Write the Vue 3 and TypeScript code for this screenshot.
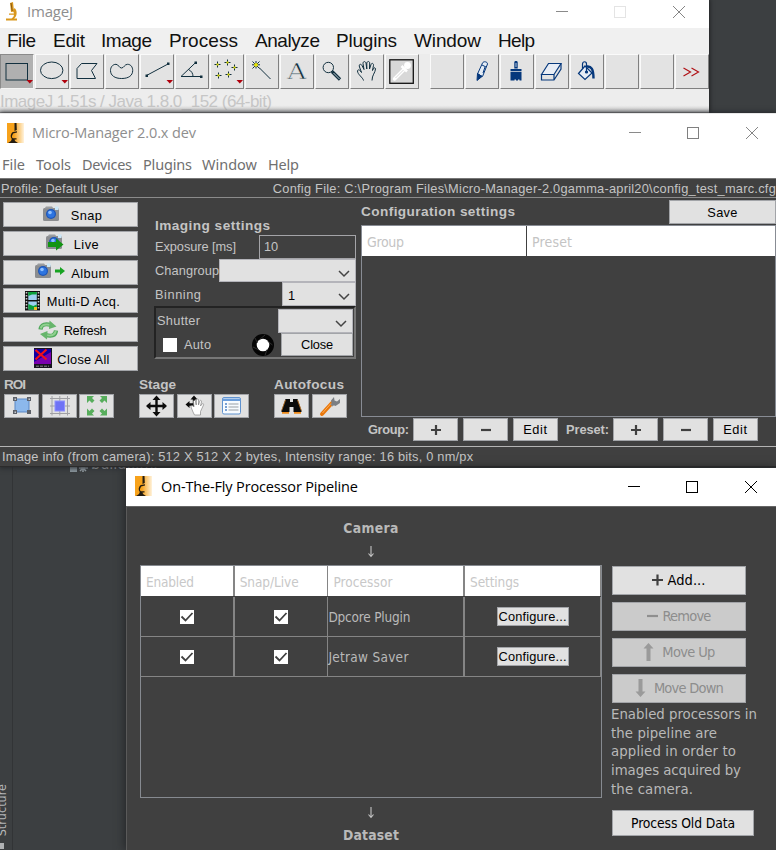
<script setup lang="ts">
interface MenuItem { label: string; fit: number }
interface Tool { name: string; art: string; pressed?: boolean }
interface Action { label: string; fit: number; iconWidth: number; art: string }

// Spreads the letters of a label so that it fills the given width.
const vFit = {
  mounted(el: HTMLElement, binding: { value: number }) {
    const count = (el.textContent ?? '').trim().length
    if (count < 2) return
    const range = document.createRange()
    range.selectNodeContents(el)
    const width = range.getBoundingClientRect().width
    el.style.letterSpacing = ((binding.value - width) / (count - 1)).toFixed(3) + 'px'
  },
}

const ijMenu: MenuItem[] = [
  { label: 'File', fit: 29 }, { label: 'Edit', fit: 32 }, { label: 'Image', fit: 51 }, { label: 'Process', fit: 69 },
  { label: 'Analyze', fit: 65 }, { label: 'Plugins', fit: 61 }, { label: 'Window', fit: 67 }, { label: 'Help', fit: 37 },
]
const mmMenu: MenuItem[] = [
  { label: 'File', fit: 23 }, { label: 'Tools', fit: 35 }, { label: 'Devices', fit: 50 },
  { label: 'Plugins', fit: 49 }, { label: 'Window', fit: 55 }, { label: 'Help', fit: 31 },
]

const tri = '<path d="M26.500 26h6.500l-3.200 3.600z" fill="#b0000c" stroke="none"/>'
const plus = (x: number, y: number) =>
  `<path d="M${x - 3} ${y}h6M${x} ${y - 3}v6" stroke="#12303f"/><rect x="${x - 1}" y="${y - 1}" width="2" height="2" fill="#e2e000" stroke="none"/>`

const mainTools: Tool[] = [
  { name: 'rect', pressed: true, art: '<rect x="6" y="9.5" width="21.5" height="16.5"/>' + tri },
  { name: 'oval', art: '<ellipse cx="16.7" cy="16.3" rx="11.2" ry="8.3"/>' + tri },
  { name: 'polygon', art: '<path d="M7 14.5 11.5 9.5H27L21.5 16.5 25.5 24.5H7z"/>' },
  { name: 'freehand', art: '<path d="M11 10.3c2.500 0 3 3.700 5.500 3.700s3-3.700 6-3.700c3.500 0 5.200 3 5.200 6.200 0 5-4 8-11 8S5.500 21.500 5.500 16.500c0-3.200 2-6.200 5.500-6.200z"/>' },
  { name: 'line', art: '<path d="M6.500 21.500 28 10"/><path d="M5.500 20.500h2.500v2.500H5.500zM27 8.500h2.500V11H27z" fill="#12303f" stroke="none"/>' + tri },
  { name: 'angle', art: '<path d="M26.500 22.500H6L20.500 8.700M13.500 15.500c3 1.500 4.500 4 4.500 7"/><path d="M25 21.500h2.500V24H25zM19.500 7.500H22V10h-2.500z" fill="#12303f" stroke="none"/>' },
  { name: 'points', art: plus(7.5, 10.5) + plus(17.5, 8.5) + plus(24.5, 13.5) + plus(8.5, 21.5) + plus(18.5, 20.5) + tri },
  { name: 'wand', art: '<path d="M7.500 7.500l7 7M14.500 7.500l-7 7M11 7v7.500M7 10.800h8M14 13.500l11.500 11.500"/><circle cx="11" cy="10.800" r="1.900" fill="#e8e600" stroke="none"/>' },
  { name: 'text', art: '<text x="16.700" y="24.500" text-anchor="middle" font-family="DejaVu Serif, serif" font-size="22" textLength="19" lengthAdjust="spacingAndGlyphs" fill="#12303f" stroke="#e3e3e3" stroke-width=".6">A</text>' },
  { name: 'zoom', art: '<circle cx="13.300" cy="13.500" r="5.200"/><path d="M17 17.500l8 8" stroke-width="3.200"/><path d="M18.500 19l6 6" stroke="#b8c4cc" stroke-width="1"/>' },
  { name: 'hand', art: '<path d="M13.500 26.500c-.5-3-6-6-6-9.500 0-1.500 2-2 4 1.500L9.500 13c-1-3 1.500-3.500 2.500-1.500l2 4-1-6c0-2.500 2.500-2.500 3-.3l.8 5.800V9c.5-2 2.700-2 2.900 0l-.2 6 1.500-4.500c.8-2 2.800-1 2.500.8l-1 5.200c1-3 3-3.500 3-1.500-.3 4-3.500 6-3.500 11.500"/>' },
  { name: 'dropper', art: '<rect x="4.800" y="5.800" width="23.500" height="23.500" fill="#d8d8d8" stroke="#111" stroke-width="1.300"/><path d="M9.500 25 19 15.500" stroke="#fff" stroke-width="3.500" stroke-linecap="round"/><path d="M10.500 24 19 15.500" stroke="#d8d8d8" stroke-width="1"/><circle cx="22.500" cy="11.500" r="3.400" fill="#fff" stroke="none"/><path d="M16.500 12l5.500 5.500" stroke="#fff" stroke-width="2.500"/>' },
]
const extraTools: Tool[] = [
  { name: 'blank-a', art: '' },
  { name: 'pencil', art: '<g stroke="#06387c"><path d="M12.500 20 17.500 9c1-2 5-1.500 5 1L17.500 22.500z" fill="#e4ecf5"/><path d="M17 11l4 2M18 19l2-6"/><path d="M12.500 19.500l4.500 3-5 4z" fill="#06387c"/></g>' },
  { name: 'brush', art: '<g fill="#06387c" stroke="none"><path d="M14.300 8c0-1.500 3.400-1.500 3.400 0v6.500h-3.400zM10.500 15h11v2h-11zM10.500 17.700h11v8.800h-2v-1h-1.500v1h-2v-1h-1.500v1h-4z"/><path d="M15.500 9h1v4h-1z" fill="#b5c8de"/></g>' },
  { name: 'eraser', art: '<g stroke="#06387c" stroke-width="1.200"><path d="M6.500 20.500 13.500 9.500H26L19 20.500z" fill="#e8edf5"/><path d="M6.500 20.500v5.500H19l7-11V9.500M19 20.500V26"/></g>' },
  { name: 'bucket', art: '<g stroke="#06387c" stroke-width="1.200"><path d="M8.500 19.500 15 12l7 7-7 6.500z" fill="#e8edf5"/><path d="M12.500 14.500V10c0-3 4-3 4 0v8"/><path d="M17 12.500c4-.5 6.500 2 6.500 12" stroke-width="2.400"/><circle cx="16.500" cy="18" r="1" fill="#06387c"/></g>' },
  { name: 'blank-b', art: '' },
  { name: 'blank-c', art: '' },
  { name: 'more', art: '<path d="M8.500 14l7 4-7 4M16.500 14l7 4-7 4" stroke="#b01116" stroke-width="1.200"/>' },
]

const camera = '<rect x="1" y="3" width="16" height="13" rx="1.500" fill="#8b8d90"/><path d="M4 1.500h6l1.500 2H2.500z" fill="#9b9da0"/><rect x="13" y="1.500" width="3.500" height="3.500" fill="#c9e6f7"/><circle cx="9" cy="9" r="5" fill="#1c55b8"/><circle cx="9" cy="9" r="3.800" fill="#2d74e0"/><circle cx="8" cy="7.500" r="1.800" fill="#8fc0ff"/>'
const actions: Action[] = [
  { label: 'Snap', fit: 31, iconWidth: 24, art: camera },
  { label: 'Live', fit: 25, iconWidth: 24, art: camera + '<path d="M3 9h8V5.500l7.500 6L11 17.500V14H3z" fill="#129412"/>' },
  { label: 'Album', fit: 38, iconWidth: 32, art: camera + '<path d="M21 7.500h5V5l5 4-5 4v-2.500h-5z" fill="#18a322"/>' },
  { label: 'Multi-D Acq.', fit: 73, iconWidth: 18, art: '<rect x="1" width="15" height="19.500" fill="#111"/><rect x="4.300" y="1" width="8.500" height="8" fill="#9fd0f0"/><rect x="4.300" y="10.500" width="8.500" height="8" fill="#9fd0f0"/><path d="M4.300 1h8.500v2.500H8L4.300 5zM4.300 13l5 2 3.500-1.500v5H4.300z" fill="#0ba03a"/><path d="M2.500 1v18M14.500 1v18" stroke="#c8c8c8" stroke-width="1.600" stroke-dasharray="1.500 1.500"/><rect x="10" y="16" width="3" height="3" fill="#f0c020"/>' },
  { label: 'Refresh', fit: 43, iconWidth: 21, art: '<g fill="none" stroke="#4fa85a" stroke-width="4.200"><path d="M2.500 9.500C3 4 8 3.500 13 5"/><path d="M18 10.500c-.5 5.500-5 6-10.500 4.500"/></g><g fill="none" stroke="#8fd08f" stroke-width="2"><path d="M2.700 8.500C3.500 4.500 8 3.800 13 5"/><path d="M17.800 11c-1 4.500-5.500 5-10.300 4"/></g><path d="M11.500.5l7 6-7.500 2.500zM9 19.500l-7-5.500 7.500-3z" fill="#67b56c"/>' },
  { label: 'Close All', fit: 52, iconWidth: 18, art: '<rect width="18" height="20" fill="#17141f"/><path d="M0 1h17v9L8 15H0z" fill="#1500a0"/><path d="M17 4v12H0v-2z" fill="#7a00ae"/><path d="M1.500 2l11 9.500M12.500 1.500l-11 10" stroke="#f21018" stroke-width="2.200"/><path d="M2 18.200h13" stroke="#888" stroke-dasharray="3 1"/>' },
]

const arrows4 = '<path d="M17.500 3v18M8.500 12h18" stroke="#0c0c0c" stroke-width="2.400"/><path d="M17.500 1.500l4 4.500h-8zM17.500 22.500l4-4.500h-8zM7 12l4.500-4v8zM28 12l-4.500-4v8z" fill="#0c0c0c"/>'
const toolGroups = [
  { title: 'ROI', fit: 22, icons: [
    '<rect x="11" y="5" width="14" height="13" fill="#8cb8ec" stroke="#5a87c4"/><path d="M9 3h4v4H9zM23 3h4v4h-4zM9 16h4v4H9zM23 16h4v4h-4z" fill="#5c6068"/><path d="M10.500 4.500h1.500V6h-1.500zM24.500 4.500H26V6h-1.500zM10.500 17.500h1.500V19h-1.500z" fill="#c5c9cf"/>',
    '<path d="M8 4.500h20M8 12h20M8 19.500h20M10 2v19.500M17.800 2v19.500M25.500 2v19.500" stroke="#a0a0a4"/><rect x="13" y="7" width="9.500" height="10" fill="#6f72f5" stroke="#8f92ff"/>',
    '<g fill="#57ad5c"><path d="M8 2h7l-2 2 2.500 2.500-2.500 2.500L10.500 6.500 8 9zM28 2h-7l2 2-2.500 2.500L23 9l2.500-2.500L28 9zM8 21.500h7l-2-2 2.500-2.500-2.500-2.500-2.500 2.500L8 14.500zM28 21.500h-7l2-2-2.500-2.500 2.500-2.500 2.500 2.500 2.500-2.500z"/></g>',
  ] },
  { title: 'Stage', fit: 37, icons: [
    arrows4,
    '<path d="M17 3v12M10 10.500h12" stroke="#0c0c0c" stroke-width="2.400"/><path d="M17 1.500l3.500 4h-7zM8.500 10.500l4-3.500v7z" fill="#0c0c0c"/><path d="M16 18l-2-5c0-2 2-1.500 3 0l-.5-5.500c0-1.500 1.500-1.500 2 0l.7 3.500.3-5c.3-1.500 1.900-1.500 2 0v5l1.300-4c.6-1.300 2-.6 1.700.8l-1 4.200 1.500-2c1-1 2 0 1.500 1l-3 6.500V21h-6z" fill="#fff" stroke="#888" stroke-width=".700"/>',
    '<rect x="8.500" y="3.500" width="18" height="16.500" rx="1.500" fill="#f7fbff" stroke="#5f92cf"/><path d="M8.500 4.500h18v2.500h-18z" fill="#6c9edb"/><path d="M11 10h2M11 13h2M11 16h2" stroke="#4f82c4" stroke-width="1.300"/><path d="M14.500 10h10M14.500 13h10M14.500 16h10" stroke="#9a9fa6" stroke-width="1.100"/>',
  ] },
  { title: 'Autofocus', fit: 70, icons: [
    '<path d="M11.500 5H16v3h3V5h4.500l4 11.500v1.500h-8v-5h-4v5h-8v-1.500z" fill="#0b0b0b"/><path d="M8 18.800h7M20 18.800h7" stroke="#ec8a1c" stroke-width="1.700"/><path d="M11.500 6l-3.800 10.500M23.500 6l3.800 10.500" stroke="#c87a24" stroke-width=".800"/>',
    '<path d="M10 20 20 9" stroke="#e8770c" stroke-width="4" stroke-linecap="round"/><path d="M10.500 19l8.500-9.500" stroke="#ffae57" stroke-width="1"/><path d="M19.500 11.500l3-3" stroke="#84888c" stroke-width="3"/><path d="M22 3l-3 3.500 1 4 3.500 1.500 4.500-3V5l-3 2.500-2.500-1z" fill="#7b7f84"/>',
  ] },
]

const headers: MenuItem[] = [
  { label: 'Enabled', fit: 48 }, { label: 'Snap/Live', fit: 59 },
  { label: 'Processor', fit: 59 }, { label: 'Settings', fit: 49 },
]
const processors: MenuItem[] = [{ label: 'Dpcore Plugin', fit: 82 }, { label: 'Jetraw Saver', fit: 80 }]
const help: MenuItem[] = [
  { label: 'Enabled processors in', fit: 146 }, { label: 'the pipeline are', fit: 106 },
  { label: 'applied in order to', fit: 125 }, { label: 'images acquired by', fit: 130 }, { label: 'the camera.', fit: 82 },
]
const groupBars = [{ label: 'Group:', fit: 41 }, { label: 'Preset:', fit: 43 }]
</script>

<template>
  <div class="desktop">
    <aside class="stripe"><span>Structure</span><i></i></aside>
    <div class="tree-file">
      <svg width="18" height="16"><path d="M0 8h7v8H0z" fill="#8b979e" /><path d="M13 7v9M9 12h9M10 9l6 6M16 9l-6 6" stroke="#9aa5ab" stroke-width="1.500" /></svg>
      <span>build.xml</span>
    </div>

    <section class="window ij">
      <header class="titlebar faded">
        <svg class="app-icon" width="24" height="22" viewBox="0 0 24 22">
          <path d="M10 2l3-1 1 9.500-3 .5zM9 12.500h5v1.300H9zM14.500 7c3 2.500 3 8-.5 10.500h3v2H6v-2h5.500c3-1.500 3-5 1.500-7.500z" fill="#d9971c" />
          <path d="M11 2l1.200 8" stroke="#8a5a12" />
        </svg>
        <span v-fit="46" class="title">ImageJ</span>
        <svg class="controls" width="130" height="14" viewBox="0 0 130 14" fill="none">
          <path d="M0 6.500h12" stroke="#8a8a8a" /><rect x="58.500" y="1.500" width="11" height="11" stroke="#e4e4e4" />
          <path d="M117 1l12 12M129 1l-12 12" stroke="#858585" />
        </svg>
      </header>
      <nav class="ij-menu"><span v-for="m in ijMenu" :key="m.label"><span v-fit="m.fit">{{ m.label }}</span></span></nav>
      <div class="toolbar">
        <div v-for="t in mainTools" :key="t.name" class="tool" :class="{ pressed: t.pressed }">
          <svg width="34" height="34" viewBox="0 0 34 34" fill="none" stroke="#12303f" v-html="t.art"></svg>
        </div>
        <div class="spacer"></div>
        <div v-for="t in extraTools" :key="t.name" class="tool">
          <svg width="34" height="34" viewBox="0 0 34 34" fill="none" stroke="#12303f" v-html="t.art"></svg>
        </div>
      </div>
      <div class="ij-status"><span v-fit="272">ImageJ 1.51s / Java 1.8.0_152 (64-bit)</span></div>
    </section>

    <section class="window mm">
      <header class="titlebar faded">
        <svg class="app-icon" width="17" height="20" viewBox="0 0 17 20">
          <defs><linearGradient id="glow"><stop offset=".4" stop-color="#f7a21b" /><stop offset="1" stop-color="#fff3dd" /></linearGradient></defs>
          <rect width="17" height="20" fill="url(#glow)" />
          <path d="M7.500 0h2l.3 7-2.300 1zM6 9l4-.8v1.300L6 10.500zM6.500 10c-2 3-2 4.500-.5 5.200h3.500v1.300H7.500l.5 1.500 3 2H1l3-2 .8-2C3 14 3.500 11 5.500 9z" fill="#241c10" />
        </svg>
        <span v-fit="164" class="title">Micro-Manager 2.0.x dev</span>
        <svg class="controls" width="130" height="14" viewBox="0 0 130 14" fill="none">
          <path d="M0 6.500h12" stroke="#8a8a8a" /><rect x="58.500" y="1.500" width="11" height="11" stroke="#808080" />
          <path d="M117 1l12 12M129 1l-12 12" stroke="#858585" />
        </svg>
      </header>
      <nav class="mm-menu"><span v-for="m in mmMenu" :key="m.label"><span v-fit="m.fit">{{ m.label }}</span></span></nav>
      <div class="profile">
        <span v-fit="117">Profile: Default User</span>
        <span v-fit="503">Config File: C:\Program Files\Micro-Manager-2.0gamma-april20\config_test_marc.cfg</span>
      </div>

      <div class="main">
        <div class="left">
          <div class="upper">
            <div class="actions">
              <button v-for="a in actions" :key="a.label" class="btn action">
                <svg :width="a.iconWidth" height="20" :viewBox="`0 0 ${a.iconWidth} 20`" v-html="a.art"></svg>
                <span v-fit="a.fit">{{ a.label }}</span>
              </button>
            </div>
            <div class="imaging">
              <h3><span v-fit="115">Imaging settings</span></h3>
              <div class="field"><span v-fit="81">Exposure [ms]</span><div class="input">10</div></div>
              <div class="field">
                <span v-fit="64">Changroup</span>
                <div class="combo wide"><svg width="12" height="8"><path d="M1 1l5 5 5-5" /></svg></div>
              </div>
              <div class="field">
                <span v-fit="46">Binning</span>
                <div class="combo"><b>1</b><svg width="12" height="8"><path d="M1 1l5 5 5-5" /></svg></div>
              </div>
              <div class="shutter">
                <div class="field">
                  <span v-fit="43">Shutter</span>
                  <div class="combo"><svg width="12" height="8"><path d="M1 1l5 5 5-5" /></svg></div>
                </div>
                <div class="shutter-row">
                  <i class="box"></i><span v-fit="27">Auto</span>
                  <svg class="iris" width="24" height="24" viewBox="0 0 24 24">
                    <circle cx="12" cy="12" r="11" fill="#050505" /><circle cx="12" cy="12" r="6.300" fill="#fff" />
                    <path d="M8 7L14 2M16.500 8l5 4M16 16.500l-2 6M8 17l-6-3M6.500 10L4 5" stroke="#3a3a3a" stroke-width=".800" />
                  </svg>
                  <button class="btn close"><span v-fit="32">Close</span></button>
                </div>
              </div>
            </div>
          </div>
          <div class="groups">
            <div v-for="g in toolGroups" :key="g.title" class="group">
              <h3><span v-fit="g.fit">{{ g.title }}</span></h3>
              <div class="group-buttons">
                <button v-for="(art, i) in g.icons" :key="i" class="btn square">
                  <svg width="35" height="24" viewBox="0 0 35 24" v-html="art"></svg>
                </button>
              </div>
            </div>
          </div>
        </div>

        <div class="config">
          <div class="config-head">
            <h3><span v-fit="154">Configuration settings</span></h3>
            <button class="btn save"><span v-fit="30">Save</span></button>
          </div>
          <div class="config-table">
            <div class="th"><span v-fit="37">Group</span></div>
            <div class="th preset"><span v-fit="40">Preset</span></div>
          </div>
          <div class="config-bar">
            <div v-for="g in groupBars" :key="g.label" class="bar-group">
              <strong><span v-fit="g.fit">{{ g.label }}</span></strong>
              <button class="btn"><svg width="12" height="12"><path d="M1 6h10M6 1v10" stroke="#404040" stroke-width="2.200" /></svg></button>
              <button class="btn"><svg width="12" height="12"><path d="M1 6h10" stroke="#404040" stroke-width="2.200" /></svg></button>
              <button class="btn"><span v-fit="24">Edit</span></button>
            </div>
          </div>
        </div>
      </div>
      <footer><span v-fit="471">Image info (from camera): 512 X 512 X 2 bytes, Intensity range: 16 bits, 0 nm/px</span></footer>
    </section>

    <section class="window pipeline">
      <header class="titlebar">
        <svg class="app-icon" width="17" height="20" viewBox="0 0 17 20">
          <rect width="17" height="20" fill="url(#glow)" />
          <path d="M7.500 0h2l.3 7-2.300 1zM6 9l4-.8v1.300L6 10.500zM6.500 10c-2 3-2 4.500-.5 5.200h3.500v1.300H7.500l.5 1.500 3 2H1l3-2 .8-2C3 14 3.500 11 5.500 9z" fill="#241c10" />
        </svg>
        <span v-fit="197" class="title">On-The-Fly Processor Pipeline</span>
        <svg class="controls" width="130" height="14" viewBox="0 0 130 14" fill="none" stroke="#000">
          <path d="M0 6.500h12" /><rect x="58.500" y="1.500" width="11" height="11" /><path d="M117 1l12 12M129 1l-12 12" />
        </svg>
      </header>
      <div class="flow">
        <div class="chain">
          <h4 class="first"><span v-fit="55">Camera</span></h4>
          <svg class="arrow" width="8" height="12"><path d="M4 0v10M1.500 7.500l2.500 3 2.500-3" /></svg>
          <div class="table">
            <div class="row head"><div v-for="h in headers" :key="h.label"><span v-fit="h.fit">{{ h.label }}</span></div></div>
            <div v-for="p in processors" :key="p.label" class="row">
              <div v-for="n in 2" :key="n" class="mid">
                <i class="box"><svg width="14" height="14"><path d="M1.500 6.500l4 4 7-7.500" /></svg></i>
              </div>
              <div><span v-fit="p.fit">{{ p.label }}</span></div>
              <div class="mid"><button class="btn configure"><span v-fit="68">Configure...</span></button></div>
            </div>
          </div>
          <svg class="arrow" width="8" height="12"><path d="M4 0v10M1.500 7.500l2.500 3 2.500-3" /></svg>
          <h4><span v-fit="56">Dataset</span></h4>
        </div>
        <div class="side">
          <button class="btn">
            <svg width="11" height="12"><path d="M0 6h11M5.500 .5v11" stroke="#404040" stroke-width="2.200" /></svg><span v-fit="38">Add...</span>
          </button>
          <button class="btn off">
            <svg width="11" height="12"><path d="M0 6h11" stroke="#8f8f8f" stroke-width="2.200" /></svg><span v-fit="49">Remove</span>
          </button>
          <button class="btn off">
            <svg width="15" height="20"><path d="M5.500 1l5 5.500h-3V19h-4V6.500h-3z" fill="#9a9a9a" /></svg><span v-fit="53">Move Up</span>
          </button>
          <button class="btn off">
            <svg width="15" height="20"><path d="M5.500 19l5-5.500h-3V1h-4v12.500h-3z" fill="#9a9a9a" /></svg><span v-fit="70">Move Down</span>
          </button>
          <p><span v-for="l in help" :key="l.label"><span v-fit="l.fit">{{ l.label }}</span></span></p>
          <button class="btn old"><span v-fit="104">Process Old Data</span></button>
        </div>
      </div>
    </section>
  </div>
</template>

<style>
body { margin: 0; overflow: hidden; background: #3c3f41; }
</style>

<style scoped>
* { box-sizing: border-box; }
.desktop {
  position: relative; width: 776px; height: 850px; overflow: hidden; background: #3c3f41;
  font-family: "Liberation Sans", Arial, sans-serif; font-size: 12.800px; white-space: nowrap;
}
h3, h4, p { margin: 0; }
svg { display: block; flex: none; }
.window { position: absolute; overflow: hidden; }

.stripe { position: absolute; top: 466px; left: 0; width: 13px; height: 384px; border-right: 1px solid #323436; }
.stripe span { position: absolute; right: 4px; top: 318px; writing-mode: vertical-rl; transform: rotate(180deg); font: 12.500px/12px "DejaVu Sans Condensed", "Noto Sans", sans-serif; color: #b4b6b8; }
.stripe i { position: absolute; left: 0; bottom: 1px; width: 4px; height: 6px; background: #b0b2b4; }
.tree-file { position: absolute; left: 70px; top: 456px; display: flex; gap: 3px; color: #b0b2b4; }
.tree-file span { font: 16px/16px "DejaVu Sans Condensed", "Noto Sans", sans-serif; }

.btn {
  display: flex; align-items: center; justify-content: center; margin: 0; padding: 0;
  border: 1.5px solid #a2a4a8; border-radius: 0; background: #e1e1e1; color: #000; font: inherit; white-space: nowrap;
}
.titlebar { display: flex; align-items: center; background: #fff; font: 14.500px "Open Sans", "Noto Sans", sans-serif; color: #000; }
.titlebar.faded { color: #8e8e8e; }
.controls { margin-left: auto; }
.title { margin-top: -2px; }

/* ImageJ */
.ij { left: 0; top: 0; width: 709px; height: 113px; background: #ececec; border-bottom: 1px solid #a2a2a2; box-shadow: 0 0 4px 1px #202224; }
.ij .titlebar { height: 28px; padding: 0 23px 4px 0; font-size: 15px; }
.ij .title { margin-left: 3px; }
.ij-menu { display: grid; grid-template-columns: 46px 48px 68px 86px 81px 78px 84px 60px; height: 26px; padding: 0 0 1px 7px; align-items: center; background: #f0f0f0; font-size: 19px; color: #111; }
.toolbar { display: flex; gap: 1px; height: 36px; }
.tool { flex: none; width: 34px; height: 35px; background: #e3e3e3; border: 1px solid #fafafa; border-right: 1.5px solid #808080; border-bottom: 1.5px solid #808080; }
.tool svg { margin: -1px; }
.tool.pressed { background: #b0b0b0; border-color: #8a8a8a #f4f4f4 #f4f4f4 #8a8a8a; }
.spacer { width: 10.500px; }
.ij-status { height: 22px; line-height: 23px; font-size: 17px; color: #c6c6c6; background: linear-gradient(#ededed 70%, #d4d4d4); }

/* Micro-Manager */
.mm { left: 0; top: 113px; width: 776px; height: 354px; background: #404040; color: #c4c4c4; border-bottom: 1px solid #2b2b2b; box-shadow: 0 0 5px 1px #25272a; }
.mm .titlebar { height: 39px; padding: 0 17px 0 7px; border-top: 1px solid #e8e8e8; }
.mm .title { margin-left: 8px; }
.mm-menu { display: grid; grid-template-columns: 34px 46px 61px 59px 66px 40px; height: 24px; padding: 0 0 1px 2px; align-items: center; background: #fff; color: #707070; font: 14.500px "Noto Sans", sans-serif; }
.profile { display: flex; justify-content: space-between; height: 22px; padding-left: 1px; line-height: 22px; border-top: 2px solid #fff; border-bottom: 1.500px solid #8b8b8b; box-shadow: inset 0 1px #777; }
.main { display: flex; height: 249px; border-bottom: 1.500px solid #b4b4b4; }
.left { width: 361px; flex: none; }
.upper { display: flex; height: 177px; }
.actions { display: flex; flex-direction: column; gap: 3.750px; padding: 4px 0 0 3px; }
.action { width: 135px; height: 25px; gap: 5px; padding-left: 3px; }
.action span { padding-top: 2px; }
h3 { height: 18px; font-size: 13.600px; line-height: 18px; font-weight: 700; }
.imaging { width: 202px; margin-left: 16px; padding-top: 19px; }
.imaging h3 { padding-left: 1px; }
.field { display: flex; height: 23.700px; padding-left: 1px; align-items: center; justify-content: space-between; }
.input { width: 97px; height: 23.500px; padding-left: 4px; border: 1.500px solid #a4a4a8; line-height: 22px; }
.combo { display: flex; align-items: center; width: 74px; height: 23.500px; padding: 2px 5px 0 5px; background: #e1e1e1; border: 1px solid #b4b4ba; color: #000; }
.combo b { font-weight: 400; }
.combo.wide { width: 137px; }
.combo svg { margin-left: auto; margin-top: 4px; fill: none; stroke: #444; stroke-width: 1.500; }
.shutter { height: 53px; padding: 1px 1px 0 1px; border: 2px solid #232323; border-right-color: #777; border-bottom-color: #777; }
.shutter .field { padding-left: 0; }
.shutter .combo { width: 75px; }
.shutter-row { display: flex; align-items: center; height: 24px; padding-left: 6px; }
.box { display: block; flex: none; width: 14px; height: 14px; background: #fff; }
.shutter-row span { margin-left: 7px; }
.iris { margin-left: 40px; }
.shutter-row .close { width: 72px; height: 23px; margin-left: auto; }
.shutter-row .close span { margin: 0; }
.groups { display: flex; padding-left: 4px; }
.group { width: 135px; flex: none; }
.group h3 { height: 19px; line-height: 19px; }
.group-buttons { display: flex; gap: 2.600px; }
.square { width: 35px; height: 24px; }
.square svg { margin: -1.500px; }
.config { display: flex; flex-direction: column; flex: 1; }
.config-head { display: flex; justify-content: space-between; height: 27px; }
.config-head h3 { padding-top: 5px; }
.save { width: 107px; height: 24px; margin-top: 2px; }
.config-table { display: grid; grid-template-columns: 164px 1fr; column-gap: 1px; align-items: start; height: 192px; border: 1px solid #888c94; }
.th { height: 30px; padding-left: 5px; background: #fff; color: #c4c4c4; font: 14px/32px "DejaVu Sans Condensed", "Noto Sans", sans-serif; }
.config-bar { display: flex; gap: 8px; padding: 1px 0 0 7px; }
.bar-group { display: flex; align-items: center; gap: 5px; }
.bar-group strong { width: 41px; margin-right: -1px; }
.bar-group:last-child strong { width: 43px; }
.bar-group .btn { width: 45px; height: 23px; }
footer { height: 19px; padding-left: 2px; line-height: 19px; }

/* Processor pipeline */
.pipeline { left: 126px; top: 468px; width: 650px; height: 382px; background: #404040; color: #b9b9b9; font-family: "DejaVu Sans Condensed", "Noto Sans", sans-serif; font-size: 13.500px; box-shadow: -1px 0 9px #222426; }
.pipeline .titlebar { height: 38px; padding: 0 18px 0 9px; font-family: "Open Sans", "Noto Sans", sans-serif; }
.pipeline .app-icon { margin-top: -2px; }
.pipeline .title { margin-left: 9px; }
.flow { display: flex; height: 344px; border-top: 1px solid #666; border-left: 1px solid #5a5a5a; }
.chain { display: flex; flex-direction: column; align-items: center; width: 462px; margin-left: 13px; }
h4 { font-size: 13.800px; line-height: 18px; font-weight: 700; }
h4.first { margin-top: 12px; }
.arrow { margin: 9px 0; fill: none; stroke: #c4c4c4; stroke-width: 1.100; }
h4.first + .arrow { margin: 9px 0 7px; }
.arrow + h4 { margin-top: -2px; }
.table { width: 462px; height: 233px; border: 1.500px solid #868a90; }
.row { display: grid; grid-template-columns: 92px 92px 135px 135px; column-gap: 1.700px; height: 40px; border-bottom: 1.500px solid #858585; background: #858585; }
.row > div { display: flex; align-items: center; background: #404040; }
.row > .mid { justify-content: center; }
.row.head { height: 31px; border-bottom: 1px solid #404040; }
.row.head > div { padding: 1px 0 0 5px; background: #fff; color: #c8c8c8; }
.box svg { fill: none; stroke: #404040; stroke-width: 1.800; }
.configure { width: 72px; height: 19px; font-size: 12.800px; font-family: "Liberation Sans", Arial, sans-serif; }
.side { display: flex; flex-direction: column; margin: 59px 0 0 10px; }
.side .btn { width: 134px; height: 29.300px; margin-bottom: 6.700px; gap: 4px; padding-bottom: 2px; font-size: 14.500px; }
.side .off { background: #cbcbcb; color: #8d8d8d; }
.side p { margin: -5px 0 0 -1px; font-size: 14.800px; line-height: 18.700px; }
.side p > span { display: block; }
.side .btn.old { width: 142px; height: 26px; margin-top: 12px; padding-bottom: 0; font-size: 13.800px; }
</style>
